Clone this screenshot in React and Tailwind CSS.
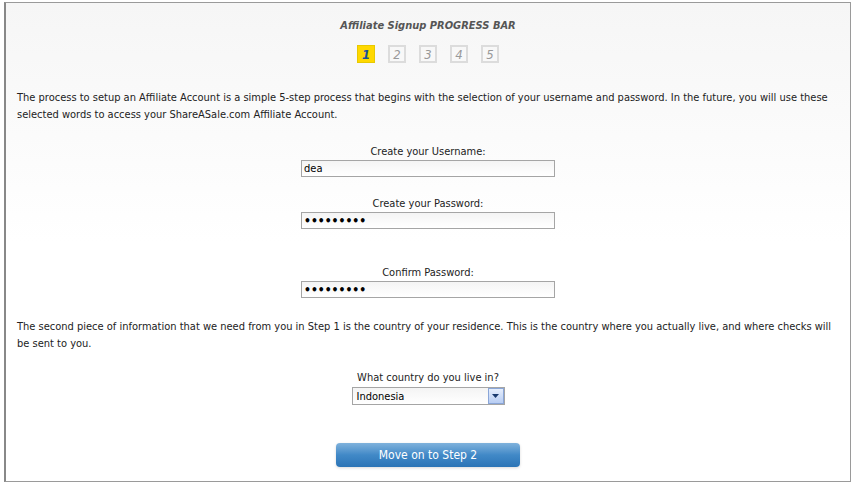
import React from 'react';

const font = { fontFamily: 'Tahoma, "DejaVu Sans Condensed", "Liberation Sans", sans-serif' };

const Field = ({ label, value, type = 'text', className = '' }) => (
  <div className={`flex flex-col items-center ${className}`}>
    <label className="text-[11px] leading-[14px] text-[#222] mb-[1px]">{label}</label>
    <input
      type={type}
      defaultValue={value}
      className={`w-[254px] h-[17px] border border-[#a5a5a5] bg-gradient-to-b from-[#f4f4f4] to-white px-[2px] text-black outline-none ${
        type === 'password' ? 'text-[12px] font-bold' : 'text-[11px]'
      }`}
    />
  </div>
);

export default function App() {
  return (
    <div className="w-[853px] h-[489px] bg-white pt-[2px] pl-[4px]" style={font}>
      <div className="w-[847px] h-[480px] border border-l-2 border-[#9a9a9a] border-l-[#888] bg-gradient-to-b from-[#f6f6f6] via-white to-white flex flex-col">
        <div className="mt-[16px] text-center text-[11px] font-bold italic text-[#555] leading-[14px]">
          Affiliate Signup PROGRESS BAR
        </div>
        <div className="flex justify-center gap-[13px] mt-[12px]">
          {[1, 2, 3, 4, 5].map((n) => (
            <div
              key={n}
              className={`w-[18px] h-[18px] flex items-center justify-center text-[13px] italic leading-none ${
                n === 1
                  ? 'bg-[#ffd800] border border-[#e8c900] text-[#1d4f9a] font-bold'
                  : 'border-2 border-[#dcdcdc] text-[#999]'
              }`}
            >
              {n}
            </div>
          ))}
        </div>

        <p className="mt-[26px] ml-[11px] mr-[12px] text-[11px] leading-[17px] text-[#222]">
          The process to setup an Affiliate Account is a simple 5-step process that begins with the selection of your username and password. In the future, you will use these selected words to access your ShareASale.com Affiliate Account.
        </p>

        <div className="flex flex-col items-center">
          <Field label="Create your Username:" value="dea" className="mt-[22px]" />
          <Field label="Create your Password:" value="password1" type="password" className="mt-[20px]" />
          <Field label="Confirm Password:" value="password1" type="password" className="mt-[37px]" />
        </div>

        <p className="mt-[20px] ml-[11px] mr-[12px] text-[11px] leading-[17px] text-[#222]">
          The second piece of information that we need from you in Step 1 is the country of your residence. This is the country where you actually live, and where checks will be sent to you.
        </p>

        <div className="flex flex-col items-center mt-[19px]">
          <label className="text-[11px] leading-[14px] text-[#222] mb-[2px]">What country do you live in?</label>
          <div className="w-[153px] h-[18px] border border-[#a5a5a5] bg-gradient-to-b from-[#f4f4f4] to-white flex items-center">
            <span className="flex-1 pl-[4px] text-[11px] text-black leading-none">Indonesia</span>
            <div className="w-[16px] h-[16px] bg-gradient-to-b from-[#e6eefc] to-[#b8cdf3] border border-[#8aa6d8] flex items-center justify-center">
              <svg width="7" height="4" viewBox="0 0 7 4"><path d="M0 0h7L3.5 4z" fill="#1a3a6e" /></svg>
            </div>
          </div>
        </div>

        <div className="flex justify-center mt-[38px]">
          <button className="w-[184px] h-[24px] rounded-[4px] bg-gradient-to-b from-[#7fb2dc] via-[#4189c7] to-[#2b74b6] text-white text-[12px] shadow-[0_1px_3px_rgba(0,0,0,0.15)]">
            Move on to Step 2
          </button>
        </div>
      </div>
    </div>
  );
}
